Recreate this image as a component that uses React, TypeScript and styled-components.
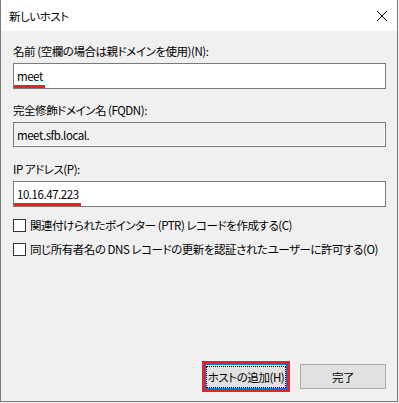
import React from 'react';
import styled, { createGlobalStyle } from 'styled-components';

const Global = createGlobalStyle`
    html, body {
        margin: 0;
        padding: 0;
        background: #f0f0f0;
    }
    body {
        font-family: "Noto Sans CJK JP", "Noto Sans", sans-serif;
        font-size: 11.5px;
        letter-spacing: -0.45px;
        color: #000;
        font-feature-settings: "palt";
    }
`;

const Window = styled.div`
    width: 396px;
    height: 401px;
    border: 1px solid #7a7a7a;
    border-top: none;
    display: flex;
    flex-direction: column;
    background: #f0f0f0;
`;

const TitleBar = styled.div`
    height: 31px;
    background: #fff;
    display: flex;
    align-items: center;
    justify-content: space-between;
    padding: 0 8px 0 8px;
    flex-shrink: 0;
`;

const Title = styled.span`
    line-height: 16px;
`;

const Close = styled.svg`
    width: 12px;
    height: 12px;
    margin-right: 1px;
`;

const Body = styled.div`
    flex: 1;
    display: flex;
    flex-direction: column;
    padding: 12px 11px 12px 12px;
`;

const Label = styled.div<{ $gap?: number }>`
    line-height: 16px;
    margin-top: ${p => p.$gap || 0}px;
    margin-bottom: 4px;
    white-space: nowrap;
`;

const Field = styled.div<{ $disabled?: boolean }>`
    height: ${p => (p.$disabled ? 25 : 26)}px;
    box-sizing: border-box;
    border: 1px solid #7a7a7a;
    background: ${p => (p.$disabled ? '#f0f0f0' : '#fff')};
    box-shadow: ${p => (p.$disabled ? 'inset -1px -1px 0 #fff' : 'none')};
    display: flex;
    align-items: center;
    padding-left: 3px;
`;

const Value = styled.span<{ $mark?: boolean }>`
    position: relative;
    line-height: 16px;
    &::after {
        content: '';
        display: ${p => (p.$mark ? 'block' : 'none')};
        position: absolute;
        left: -3px;
        right: -2px;
        bottom: -4px;
        height: 3px;
        background: #e8202e;
    }
`;

const CheckRow = styled.label<{ $gap: number }>`
    display: flex;
    align-items: center;
    gap: 4px;
    margin-top: ${p => p.$gap}px;
    line-height: 16px;
    white-space: nowrap;
`;

const Box = styled.span`
    width: 13px;
    height: 13px;
    box-sizing: border-box;
    border: 1px solid #333;
    background: #fff;
    flex-shrink: 0;
`;

const Buttons = styled.div`
    margin-top: auto;
    display: flex;
    justify-content: flex-end;
    align-items: center;
    gap: 13px;
`;

const Button = styled.div<{ $primary?: boolean }>`
    width: ${p => (p.$primary ? 82 : 86)}px;
    height: 25px;
    box-sizing: border-box;
    display: flex;
    align-items: center;
    justify-content: center;
    background: #e1e1e1;
    border: 1px solid ${p => (p.$primary ? '#0078d7' : '#adadad')};
    outline: ${p => (p.$primary ? '3px solid #e8202e' : 'none')};
    line-height: 16px;
    white-space: nowrap;
`;

const Focus = styled.span`
    border: 1px dotted #000;
    padding: 2px 0;
    width: 100%;
    text-align: center;
    box-sizing: border-box;
`;

export default function App() {
    return (
        <>
            <Global />
            <Window>
                <TitleBar>
                    <Title>新しいホスト</Title>
                    <Close viewBox="0 0 12 12">
                        <path d="M1 1 L11 11 M11 1 L1 11" stroke="#000" strokeWidth="1" fill="none" />
                    </Close>
                </TitleBar>
                <Body>
                    <Label>名前 (空欄の場合は親ドメインを使用)(N):</Label>
                    <Field>
                        <Value $mark>meet</Value>
                    </Field>
                    <Label $gap={13}>完全修飾ドメイン名 (FQDN):</Label>
                    <Field $disabled>
                        <Value>meet.sfb.local.</Value>
                    </Field>
                    <Label $gap={14}>IP アドレス(P):</Label>
                    <Field>
                        <Value $mark>10.16.47.223</Value>
                    </Field>
                    <CheckRow $gap={10}>
                        <Box />
                        関連付けられたポインター (PTR) レコードを作成する(C)
                    </CheckRow>
                    <CheckRow $gap={8}>
                        <Box />
                        同じ所有者名の DNS レコードの更新を認証されたユーザーに許可する(O)
                    </CheckRow>
                    <Buttons>
                        <Button $primary>
                            <Focus>ホストの追加(H)</Focus>
                        </Button>
                        <Button>完了</Button>
                    </Buttons>
                </Body>
            </Window>
        </>
    );
}
